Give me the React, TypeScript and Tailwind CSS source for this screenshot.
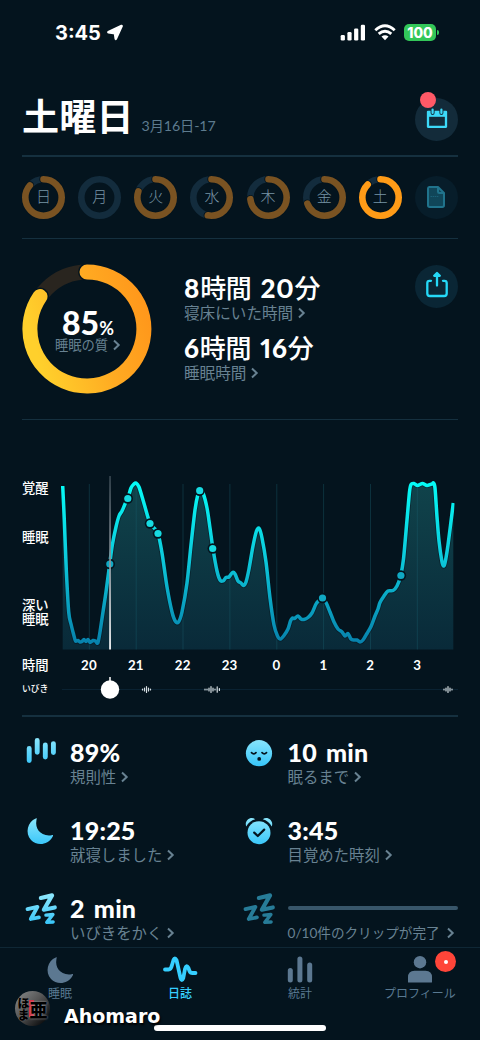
import React from 'react'

type Point = [number, number]

interface DayRingProps {
    label: string,
    percent: number,
    active?: boolean
}

interface StatProps {
    icon: React.ReactNode,
    value: string,
    label: string
}

const days: DayRingProps[] = [
    { label: '日', percent: 86 },
    { label: '月', percent: 0 },
    { label: '火', percent: 80 },
    { label: '水', percent: 53 },
    { label: '木', percent: 73 },
    { label: '金', percent: 69 },
    { label: '土', percent: 87, active: true },
]

const hours = ['20', '21', '22', '23', '0', '1', '2', '3']
const gridLines = [89.3, 136.2, 183, 229.9, 276.8, 323.6, 370.5, 417.3]

const curve: Point[] = [
    [62.7, 486], [64.3, 520], [66.3, 570], [68.7, 612], [71, 624], [73.5, 634], [75.5, 641], [78, 640.5], [80, 642], [82, 641.5],
    [84, 639.5], [86, 641.5], [88, 639.5], [90, 642.5], [93, 640.5], [95.5, 641], [97.8, 643], [100, 632], [103, 612], [106, 592],
    [109.7, 564], [112.5, 544], [116, 527], [119, 516], [122, 511], [125, 504], [127.8, 498.5], [131, 488], [134, 484], [136, 483], [139, 487],
    [143, 500], [147, 514], [150, 523.5], [154, 528], [158, 533.5], [162, 553], [167, 587], [172, 612], [175.5, 621.5],
    [178.5, 622], [182, 612], [187, 583], [191, 545], [195, 510], [198, 494], [200, 490.5], [203, 493], [207, 508], [210, 528], [213, 549],
    [217, 571], [220, 580], [223, 581], [226, 577.5], [229, 577], [232.5, 572.5], [235, 574], [238, 581], [241, 583], [243.5, 585.5],
    [246, 582], [249, 569], [253, 546], [256.5, 531], [259.2, 528.5], [262, 538], [266, 562], [270, 598], [274, 625], [277.5, 636],
    [280.5, 639], [284, 635.5], [288, 629], [290.5, 621], [292.5, 618], [294.5, 618.5], [298, 616], [301, 619], [304, 619.5], [308, 617.5], [312, 613],
    [316, 604], [319, 600.5], [322.5, 598], [326, 602.5], [330, 612], [334, 622], [338, 629], [342, 632], [345, 636], [348, 633.5], [351, 639],
    [354, 640], [357, 640], [360, 642], [363, 640], [367, 633.5], [371, 626.5], [375, 616], [378, 609], [380, 602.5], [384, 596],
    [388, 591], [393, 590.5], [397, 586], [400.7, 575.5], [403.5, 559], [407, 520], [409.5, 492], [411, 484.5], [414, 483.5], [417.5, 485.5],
    [422.5, 483.5], [427, 485.5], [432, 484], [433.5, 483], [435, 488], [437, 517], [439, 541], [442, 562], [443.5, 566], [445, 563],
    [448, 545], [453.3, 503],
]

const dots: Point[] = [[109.8, 564], [127.8, 498.5], [150, 523.5], [158, 533.5], [199.7, 490.7], [212.7, 548.5], [322.5, 598], [400.9, 575.5]]

const toPath = (points: Point[]) => {
    let d = `M${points[0][0]} ${points[0][1]}`
    for (let i = 0; i < points.length - 1; i++) {
        const p0 = points[Math.max(i - 1, 0)]
        const p1 = points[i]
        const p2 = points[i + 1]
        const p3 = points[Math.min(i + 2, points.length - 1)]
        d += ` C${p1[0] + (p2[0] - p0[0]) / 7} ${p1[1] + (p2[1] - p0[1]) / 7} ${p2[0] - (p3[0] - p1[0]) / 7} ${p2[1] - (p3[1] - p1[1]) / 7} ${p2[0]} ${p2[1]}`
    }
    return d
}

const Chevron = ({ className = 'ml-1' }: { className?: string }) => (
    <svg className={`shrink-0 ${className}`} width="9" height="12" viewBox="0 0 9 12" fill="none" stroke="#688292" strokeWidth="2">
        <path d="M2 1.5L6.7 6L2 10.5" />
    </svg>
)

const Divider = () => <div className="mx-[22px] h-[1.5px] shrink-0 bg-[#15303f]"></div>

const DayRing = ({ label, percent, active }: DayRingProps) => {
    const length = 2 * Math.PI * 18.2
    return (
        <div className="relative flex h-[43px] w-[43px] items-center justify-center">
            <svg className="absolute inset-0" width="43" height="43" viewBox="0 0 43 43" fill="none">
                <circle cx="21.5" cy="21.5" r="18.2" stroke="#132c3d" strokeWidth="6.6" />
                {percent > 0 && (
                    <g transform="rotate(-90 21.5 21.5)" strokeLinecap="round" strokeDasharray={`${(length * percent) / 100} ${length}`}>
                        <circle cx="21.5" cy="21.5" r="18.2" stroke="#04141e" strokeWidth="8.4" />
                        <circle cx="21.5" cy="21.5" r="18.2" stroke={active ? '#ff9b17' : '#7a5322'} strokeWidth="6.6" />
                    </g>
                )}
            </svg>
            <span className="relative -top-[1px] text-[15px] leading-5 font-light text-[#7894a6]">{label}</span>
        </div>
    )
}

const QualityRing = () => (
    <div className="relative -mt-px h-[130px] w-[130px]">
        <svg className="absolute inset-0" width="130" height="130" viewBox="0 0 130 130" fill="none">
            <defs>
                <linearGradient id="quality" x1="1" y1="0.2" x2="0" y2="0.5">
                    <stop offset="0" stopColor="#ff971b" />
                    <stop offset="0.45" stopColor="#ffab22" />
                    <stop offset="1" stopColor="#ffd02c" />
                </linearGradient>
            </defs>
            <circle cx="65" cy="65" r="57" stroke="#29251f" strokeWidth="15" />
            <path d="M65 8 A57 57 0 1 1 18 32.6" stroke="#04141e" strokeWidth="18" strokeLinecap="round" />
            <path d="M65 8 A57 57 0 1 1 18 32.6" stroke="url(#quality)" strokeWidth="15" strokeLinecap="round" />
        </svg>
        <div className="relative flex h-full flex-col items-center pt-[44px] pl-[2px]">
            <div className="flex h-[29px] items-baseline text-[32px] leading-[29px] font-black">
                85<span className="text-[18px] leading-5 font-bold">%</span>
            </div>
            <div className="flex items-center text-[13.3px] leading-4 text-[#688292]">睡眠の質<Chevron /></div>
        </div>
    </div>
)

const Duration = ({ hour, minute, label }: { hour: string, minute: string, label: string }) => (
    <div className="h-[60px]">
        <div className="text-[26px] leading-8 font-medium tracking-[-0.3px] whitespace-nowrap proportional-nums">
            <span className="font-black tracking-[0.8px]">{hour}</span>時間
            <span className="ml-[9px] font-black tracking-[0.8px]">{minute}</span>分
        </div>
        <div className="-mt-px flex items-center text-[15.6px] leading-5 text-[#688292]">{label}<Chevron /></div>
    </div>
)

const Snore = ({ x, wide }: { x: number, wide?: boolean }) => (
    <g stroke="#d7dfe3" strokeWidth="1.2" strokeLinecap="round">
        <path d={`M${x - 4} 689v1 M${x - 2} 688v3 M${x} 686.5v6 M${x + 2} 688v3 M${x + 4} 689v1`} />
        {wide && <path d={`M${x + 6.2} 686.8v5.4 M${x + 8.4} 688.5v2 M${x - 6} 689v1`} />}
    </g>
)

const SleepChart = () => {
    const line = toPath(curve)
    return (
        <svg className="absolute top-[54px] left-[60px]" width="400" height="230" viewBox="60 474 400 230" fill="none">
            <defs>
                <linearGradient id="line" gradientUnits="userSpaceOnUse" x1="0" y1="483" x2="0" y2="645">
                    <stop offset="0" stopColor="#05fbf6" />
                    <stop offset="0.45" stopColor="#0ccbdc" />
                    <stop offset="1" stopColor="#0780ab" />
                </linearGradient>
                <linearGradient id="area" gradientUnits="userSpaceOnUse" x1="0" y1="483" x2="0" y2="649">
                    <stop offset="0" stopColor="#10434b" />
                    <stop offset="1" stopColor="#092a39" />
                </linearGradient>
                <linearGradient id="cursor" gradientUnits="userSpaceOnUse" x1="0" y1="476" x2="0" y2="649">
                    <stop offset="0" stopColor="#34434d" />
                    <stop offset="0.5" stopColor="#8b949b" />
                    <stop offset="1" stopColor="#ffffff" />
                </linearGradient>
                <clipPath id="plot"><rect x="61" y="474" width="393.5" height="175.5" /></clipPath>
            </defs>
            <path d={`${line} L453.3 649.5 L62.7 649.5 Z`} fill="url(#area)" />
            {gridLines.map((x) => (
                <path key={x} d={`M${x} 484V649.5`} stroke="#1a6270" strokeOpacity="0.38" strokeWidth="1" />
            ))}
            <g clipPath="url(#plot)">
                <path d={line} stroke="#04141e" strokeOpacity="0.5" strokeWidth="5.2" strokeLinejoin="round" />
                <path d={line} stroke="url(#line)" strokeWidth="3.5" strokeLinejoin="round" />
            </g>
            {dots.map(([x, y]) => (
                <g key={x}>
                    <circle cx={x} cy={y} r="5.2" fill="#04141e" />
                    <circle cx={x} cy={y} r="3.6" fill={y > 560 ? '#10a9c4' : '#17dbe2'} />
                </g>
            ))}
            <rect x="109.2" y="476" width="1.7" height="173.5" fill="url(#cursor)" />
            <path d="M62 689.5H458" stroke="#0a2232" />
            <path d="M110 677V690" stroke="#fff" strokeWidth="1.5" />
            <circle cx="110" cy="689.5" r="9.2" fill="#fff" />
            <Snore x={146.5} />
            <Snore x={211} wide />
            <Snore x={448} />
        </svg>
    )
}

const Stat = ({ icon, value, label }: StatProps) => (
    <div className="flex h-[78px]">
        <div className="w-[47px] shrink-0">{icon}</div>
        <div className="whitespace-nowrap">
            <div className="text-[25px] leading-[30px] font-black tracking-[0.2px] [word-spacing:3px]">{value}</div>
            <div className="flex items-center text-[15.4px] leading-5 text-[#688292]">{label}<Chevron /></div>
        </div>
    </div>
)

const RegularityIcon = () => (
    <svg className="-mt-[2px]" width="34" height="32" viewBox="0 0 34 32" fill="none" stroke="url(#ice)" strokeWidth="4.9" strokeLinecap="round">
        <path d="M6.2 13.4L6.21 25.6 M14.2 5.4L14.21 17.2 M22.3 10L22.31 22 M30.4 8.6L30.41 17.6" />
    </svg>
)

const MoonIcon = ({ fill }: { fill: string }) => (
    <svg width="34" height="32" viewBox="0 0 34 32">
        <path d="M12.8 3.6C14.4 2.8 13.6 4 13.4 5.6C11.9 13.6 17.6 21.8 28.6 20.2C30.2 19.8 30.4 20.4 29.6 21.8C24.8 30.6 13.5 31 8 25C1.8 18.2 4.4 7 12.8 3.6Z" fill={fill} />
    </svg>
)

const ZzzIcon = ({ dim }: { dim?: boolean }) => (
    <svg className="-mt-[1px] -ml-px" width="36" height="36" viewBox="0 0 34 34" fill="none" stroke={dim ? '#277c98' : 'url(#ice)'} strokeLinecap="round" strokeLinejoin="round">
        <path strokeWidth="3.9" d="M17.8 5.6L28.4 3.2L20.6 16.8L31 14.6" />
        <path strokeWidth="3.6" d="M5.2 16.2L14.6 14L8.3 25.5L16 24" />
        <path strokeWidth="3.2" d="M22.6 21.8L29.2 21.2L23.4 28.7L29.4 28.3" />
    </svg>
)

const FaceIcon = () => (
    <svg className="-mt-[1px] ml-[2px]" width="34" height="32" viewBox="0 0 34 32" fill="none">
        <circle cx="16" cy="17.2" r="13.1" fill="url(#ice)" />
        <path d="M8.5 16.6Q10.7 19 13 16.6 M19 16.6Q21.3 19 23.5 16.6" stroke="#04141e" strokeWidth="1.7" strokeLinecap="round" />
        <circle cx="16.2" cy="22.9" r="1.9" fill="#04141e" />
    </svg>
)

const AlarmIcon = () => (
    <svg className="ml-[2px]" width="34" height="32" viewBox="0 0 34 32" fill="none">
        <circle cx="16" cy="17.7" r="11.5" fill="url(#ice)" />
        <path d="M3.3 11.5C0.8 6 7.5 0.6 12.2 4.2C8.3 5.2 5.1 7.8 3.3 11.5Z M28.7 11.5C31.2 6 24.5 0.6 19.8 4.2C23.7 5.2 26.9 7.8 28.7 11.5Z" fill="url(#ice)" />
        <path d="M11.2 17.6L14.8 21L21.2 14.6" stroke="#04141e" strokeWidth="2.2" strokeLinecap="round" strokeLinejoin="round" />
    </svg>
)

const Tab = ({ icon, label, active }: { icon: React.ReactNode, label: string, active?: boolean }) => (
    <div className={`flex w-[120px] flex-col items-center pt-[6px] text-[12px] leading-4 ${active ? 'font-medium text-[#36cfff]' : 'text-[#597991]'}`}>
        <div className="h-[32px]">{icon}</div>
        {label}
    </div>
)

const App = () => {
    return (
        <div className="relative flex h-[1040px] w-[480px] flex-col overflow-hidden bg-[#04141e] font-['Lato','Noto_Sans_CJK_JP',sans-serif] text-white">
            <svg className="absolute" width="0" height="0">
                <defs>
                    <linearGradient id="ice" gradientUnits="userSpaceOnUse" x1="0" y1="3" x2="0" y2="30">
                        <stop offset="0" stopColor="#8be6fc" />
                        <stop offset="1" stopColor="#38c6fa" />
                    </linearGradient>
                </defs>
            </svg>

            {/* status bar */}
            <div className="flex h-[65px] shrink-0 items-center pl-[55px] font-['Inter'] text-[20px] font-bold">
                <span className="w-[50px] leading-5">3:45</span>
                <svg className="mt-px" width="20" height="20" viewBox="0 0 20 20" fill="#fff" stroke="#fff" strokeWidth="2.6" strokeLinejoin="round">
                    <path d="M16.6 3L10.8 15.8L10 10.2L3.4 9.2Z" />
                </svg>
                <div className="ml-auto flex items-center gap-2 pr-[41px]">
                    <svg width="26" height="17" viewBox="0 0 26 17" fill="#fff">
                        <rect x="0.7" y="11" width="4.2" height="5.5" rx="1.3" />
                        <rect x="7.4" y="8" width="4.2" height="8.5" rx="1.3" />
                        <rect x="14.1" y="4.5" width="4.2" height="12" rx="1.3" />
                        <rect x="20.8" y="0.7" width="4.2" height="15.8" rx="1.3" />
                    </svg>
                    <svg width="22" height="17" viewBox="0 0 22 17" fill="none" stroke="#fff" strokeWidth="2.9">
                        <path d="M1.3 6.2Q11 -2.6 20.7 6.2 M4.7 9.9Q11 4.4 17.3 9.9" />
                        <path d="M7.5 12.6Q11 9.8 14.5 12.6L11 16.3Z" fill="#fff" stroke="none" />
                    </svg>
                    <div className="flex items-center gap-[1px]">
                        <div className="flex h-[17px] w-[32px] items-center justify-center rounded-[5px] bg-[#33c759] text-[14px] leading-4 font-extrabold">100</div>
                        <div className="h-[5px] w-[2px] rounded-r bg-[#33c759]"></div>
                    </div>
                </div>
            </div>

            {/* title */}
            <div className="flex h-[90px] shrink-0 items-center px-[22px]">
                <div className="flex items-baseline pt-[14px]">
                    <h1 className="text-[37px] leading-[44px] font-bold tracking-[0.2px]">土曜日</h1>
                    <span className="ml-[8px] text-[14.2px] tracking-[-0.1px] text-[#5d7b8e]">3月16日-17</span>
                </div>
                <div className="relative mt-[18px] ml-auto flex h-[43px] w-[43px] items-center justify-center rounded-full bg-[#132b3a]">
                    <svg width="24" height="24" viewBox="0 0 24 24" fill="none">
                        <path d="M3 4.8H21V19.8H3Z" stroke="#3cd9f8" strokeWidth="2.3" strokeLinejoin="round" />
                        <path d="M3 4.8H21V9.8H3Z" fill="#3cd9f8" />
                        <path d="M7.6 0V6 M16.4 0V6" stroke="#132b3a" strokeWidth="4" strokeLinecap="round" />
                        <path d="M7.6 2.6V5.9 M16.4 2.6V5.9" stroke="#3cd9f8" strokeWidth="2.2" strokeLinecap="round" />
                    </svg>
                    <div className="absolute -top-[5.5px] left-[4.5px] h-4 w-4 rounded-full bg-[#ff5967]"></div>
                </div>
            </div>
            <Divider />

            {/* week */}
            <div className="flex h-[81px] shrink-0 items-center justify-between px-[22px]">
                {days.map((day) => <DayRing key={day.label} {...day} />)}
                <div className="flex h-[43px] w-[43px] items-center justify-center rounded-full bg-[#071d2a]">
                    <svg width="20" height="24" viewBox="0 0 20 24" fill="none" stroke="#20738c" strokeWidth="2" strokeLinejoin="round">
                        <path d="M3.2 2H12L18 8V20.3Q18 22 16.3 22H3.7Q2 22 2 20.3V3.5Q2 2 3.2 2Z" fill="#104659" />
                        <path d="M12 2V6.7Q12 8 13.3 8H18" />
                        <path d="M4.5 11.5H13" stroke="#1b6077" strokeWidth="1" strokeDasharray="1.5 0.6" />
                    </svg>
                </div>
            </div>
            <Divider />

            {/* sleep quality */}
            <div className="flex h-[179.5px] shrink-0 items-start px-[22px] pt-[26px]">
                <QualityRing />
                <div className="ml-[32px] pt-[7px]">
                    <Duration hour="8" minute="20" label="寝床にいた時間" />
                    <Duration hour="6" minute="16" label="睡眠時間" />
                </div>
                <div className="ml-auto flex h-[43px] w-[43px] items-center justify-center rounded-full bg-[#0a2635]">
                    <svg className="-mt-1" width="24" height="28" viewBox="0 0 24 28" fill="none" stroke="#25d9f8" strokeWidth="2.3" strokeLinecap="round" strokeLinejoin="round">
                        <path d="M6 9.8H4.5Q2.3 9.8 2.3 12V22.5Q2.3 25 4.8 25H19.2Q21.7 25 21.7 22.5V12Q21.7 9.8 19.5 9.8H18" />
                        <path d="M12 14.5V4 M9.2 4.8L12 2L14.8 4.8Z" />
                    </svg>
                </div>
            </div>
            <Divider />

            {/* hypnogram */}
            <div className="relative h-[295px] shrink-0 px-[22px] text-[13.3px] leading-[14px] font-medium">
                <SleepChart />
                <div className="flex h-[237px] w-[40px] flex-col pt-[61px]">
                    <span>覚醒</span>
                    <span className="mt-[35px]">睡眠</span>
                    <span className="mt-[54px]">深い<br />睡眠</span>
                </div>
                <div className="flex h-[16px] items-center">
                    <span className="w-[43.5px]">時間</span>
                    {hours.map((hour) => (
                        <span key={hour} className="w-[46.9px] text-center font-bold tracking-[0.2px]">{hour}</span>
                    ))}
                </div>
                <div className="mt-[10px] text-[8.8px] leading-3">いびき</div>
            </div>
            <Divider />

            {/* stats */}
            <div className="grid min-h-0 flex-1 grid-cols-[217.5px_1fr] content-start overflow-hidden pt-[20px] pr-[22px] pl-[23px]">
                <Stat icon={<RegularityIcon />} value="89%" label="規則性" />
                <Stat icon={<FaceIcon />} value="10 min" label="眠るまで" />
                <Stat icon={<MoonIcon fill="url(#ice)" />} value="19:25" label="就寝しました" />
                <Stat icon={<AlarmIcon />} value="3:45" label="目覚めた時刻" />
                <Stat icon={<ZzzIcon />} value="2 min" label="いびきをかく" />
                <div className="flex h-[78px]">
                    <div className="w-[47px] shrink-0"><ZzzIcon dim /></div>
                    <div className="flex-1 pt-[13px] whitespace-nowrap">
                        <div className="h-[4.5px] rounded-full bg-[#38566a]"></div>
                        <div className="mt-[13px] flex items-center text-[13.6px] leading-5 text-[#688292]">0/10件のクリップが完了<Chevron className="ml-[6px]" /></div>
                    </div>
                </div>
            </div>

            {/* tab bar */}
            <div className="flex h-[93px] shrink-0 border-t border-[#0f2735] bg-[#04141e]">
                <Tab label="睡眠" icon={<MoonIcon fill="#5c7891" />} />
                <Tab active label="日誌" icon={(
                    <svg width="36" height="30" viewBox="0 0 36 30" fill="none" stroke="#35cfff" strokeWidth="3.8" strokeLinecap="round" strokeLinejoin="round">
                        <path d="M3 15.5H6.5Q9 15.5 10 11L11.5 6Q12.8 2.6 14.5 6L18.5 24Q19.8 28 21.3 24L23 15Q24.3 10 26.4 14L27.5 17Q28.3 19 30.5 19H33.5" />
                    </svg>
                )} />
                <Tab label="統計" icon={(
                    <svg width="26" height="30" viewBox="0 0 26 30" fill="#5c7891">
                        <rect x="0.8" y="14" width="5" height="14.5" rx="2.5" />
                        <rect x="10.4" y="2.5" width="5" height="26" rx="2.5" />
                        <rect x="20.2" y="8.5" width="5" height="20" rx="2.5" />
                    </svg>
                )} />
                <Tab label="プロフィール" icon={(
                    <div className="relative">
                        <svg width="24" height="30" viewBox="0 0 24 30" fill="#5c7891">
                            <circle cx="12" cy="8.2" r="6.2" />
                            <path d="M0 28V23.5Q0 16.8 6.5 16.8H17.5Q24 16.8 24 23.5V28Q24 28.5 23.5 28.5H0.5Q0 28.5 0 28Z" />
                        </svg>
                        <div className="absolute -top-[3px] left-[27px] flex h-[21px] w-[21px] items-center justify-center rounded-full bg-[#ff4539]">
                            <div className="h-1 w-1 rounded-full bg-white"></div>
                        </div>
                    </div>
                )} />
            </div>

            {/* home indicator */}
            <div className="absolute top-[1025px] left-[154px] h-[6px] w-[172px] rounded-full bg-white"></div>

            {/* watermark */}
            <div className="absolute top-[991px] left-[15px] flex items-center">
                <div className="relative flex h-[35px] w-[35px] items-center justify-center rounded-full bg-[linear-gradient(135deg,#8a8d8e_0%,#555_45%,#08090a_90%)] font-['Noto_Sans_CJK_JP'] text-black">
                    <div className="absolute top-[9px] left-[14px] h-[17px] w-[5px] bg-[#d92c42]"></div>
                    <span className="relative w-[12px] text-[12px] leading-[12px] font-black [text-shadow:0_0_1px_#888]">ほま</span>
                    <span className="relative text-[18px] leading-5 font-black [text-shadow:0_0_2px_#bbb]">亜</span>
                </div>
                <span className="mt-[14px] ml-[14px] font-['DejaVu_Sans'] text-[19px] leading-5 font-bold [text-shadow:1px_2px_2px_#000]">Ahomaro</span>
            </div>
        </div>
    )
}

export default App
